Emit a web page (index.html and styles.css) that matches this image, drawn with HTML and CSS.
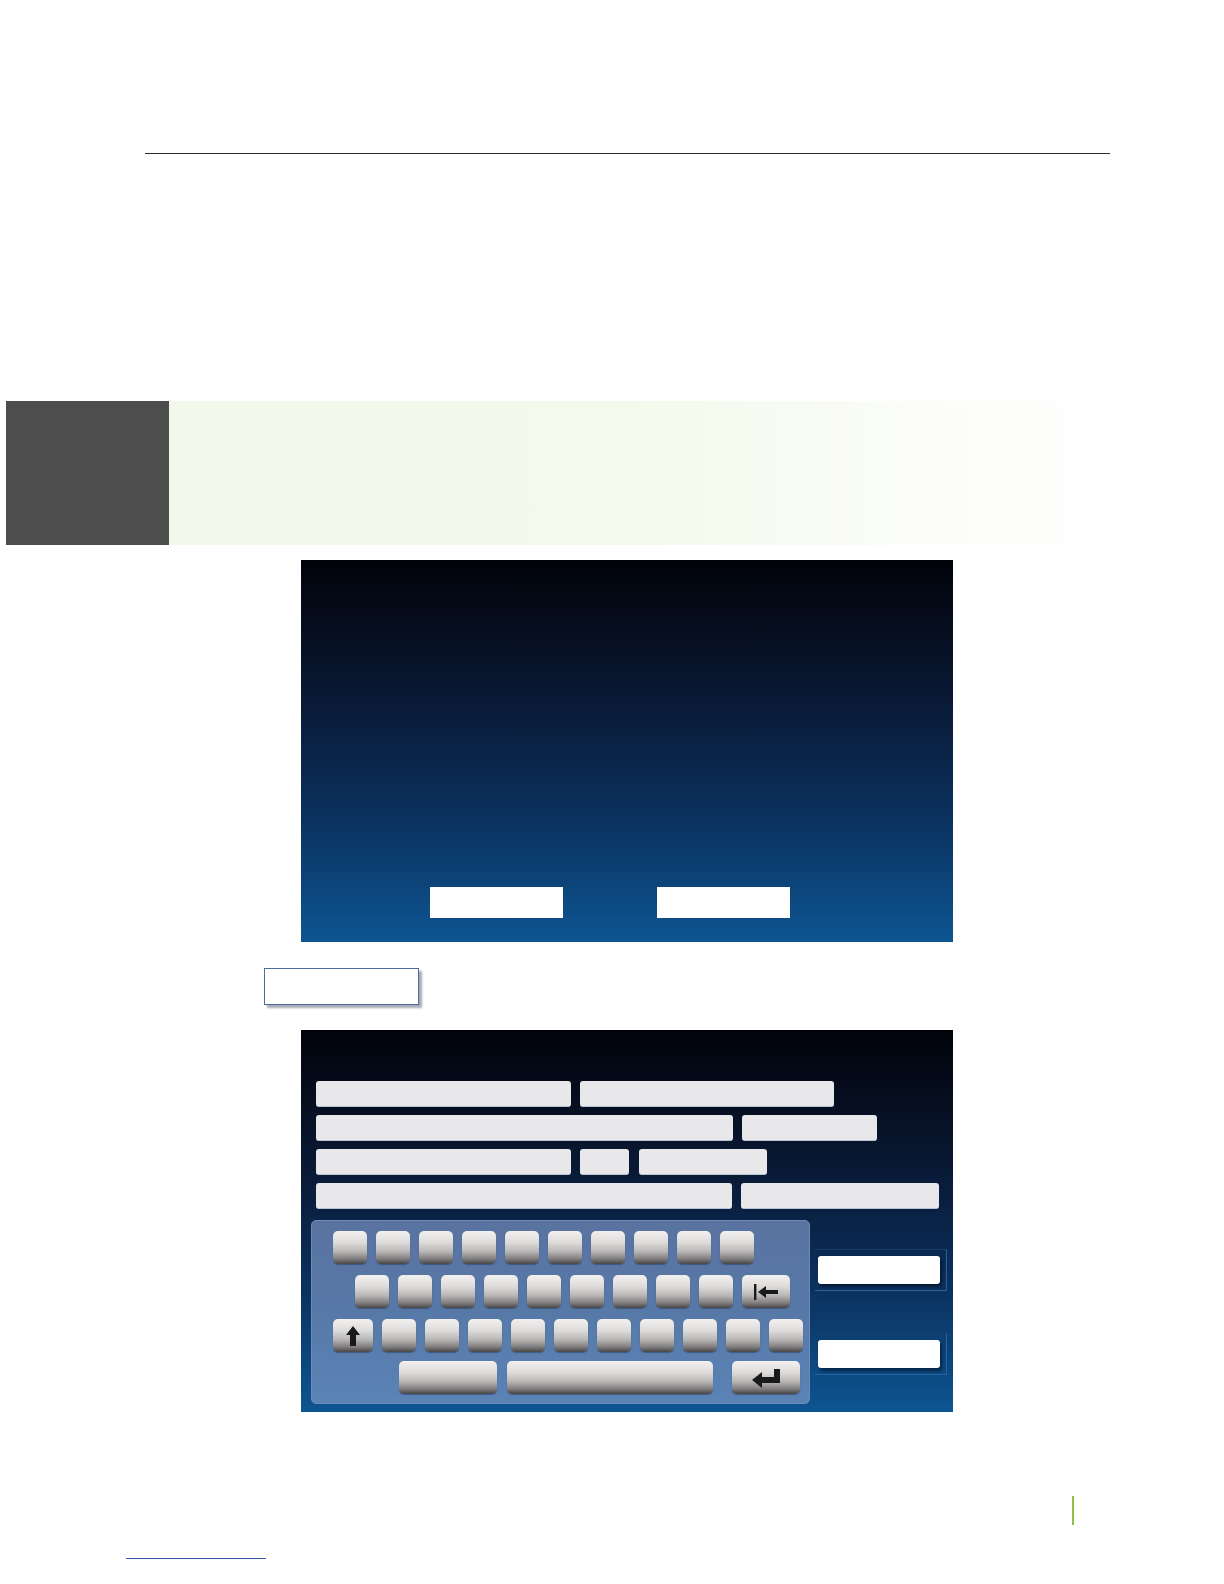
FILE: index.html
```html
<!DOCTYPE html>
<html>
<head>
<meta charset="utf-8">
<link rel="stylesheet" href="styles.css">
</head>
<body>
<div class="page">
  <div class="top-rule"></div>

  <div class="banner">
    <div class="banner-tab"></div>
    <div class="banner-body"></div>
  </div>

  <div class="screen screen-dialog">
    <div class="dialog-buttons">
      <div class="dlg-btn"></div>
      <div class="dlg-btn"></div>
    </div>
  </div>

  <div class="label-box"></div>

  <div class="screen screen-form">
    <div class="fields">
      <div class="field-row">
        <div class="field w255"></div>
        <div class="field w254"></div>
      </div>
      <div class="field-row">
        <div class="field w417"></div>
        <div class="field w135"></div>
      </div>
      <div class="field-row">
        <div class="field w255"></div>
        <div class="field w49"></div>
        <div class="field w128"></div>
      </div>
      <div class="field-row">
        <div class="field w416"></div>
        <div class="field w198"></div>
      </div>
    </div>

    <div class="lower">
      <div class="keyboard">
        <div class="key-row r1">
          <div class="key"></div><div class="key"></div><div class="key"></div><div class="key"></div><div class="key"></div>
          <div class="key"></div><div class="key"></div><div class="key"></div><div class="key"></div><div class="key"></div>
        </div>
        <div class="key-row r2">
          <div class="key"></div><div class="key"></div><div class="key"></div><div class="key"></div><div class="key"></div>
          <div class="key"></div><div class="key"></div><div class="key"></div><div class="key"></div>
          <div class="key key-back">
            <svg width="30" height="20" viewBox="0 0 30 20"><rect x="3" y="2" width="2.4" height="16" fill="#1a1a1a"/><path d="M7 10 L15 4 L15 8 L27 8 L27 12 L15 12 L15 16 Z" fill="#1a1a1a"/></svg>
          </div>
        </div>
        <div class="key-row r3">
          <div class="key key-shift">
            <svg width="18" height="24" viewBox="0 0 18 24"><path d="M9 2 L16 11 L12 11 L12 22 L6 22 L6 11 L2 11 Z" fill="#1a1a1a"/></svg>
          </div>
          <div class="key"></div><div class="key"></div><div class="key"></div><div class="key"></div><div class="key"></div>
          <div class="key"></div><div class="key"></div><div class="key"></div><div class="key"></div><div class="key"></div>
        </div>
        <div class="key-row r4">
          <div class="key key-mode"></div>
          <div class="key key-space"></div>
          <div class="key key-enter">
            <svg width="34" height="22" viewBox="0 0 34 22"><path d="M25 2 L31 2 L31 16 L13 16 L13 21 L3 13 L13 5 L13 10 L25 10 Z" fill="#1a1a1a"/></svg>
          </div>
        </div>
      </div>

      <div class="side-buttons">
        <div class="side-slot"><div class="side-btn"></div></div>
        <div class="side-slot"><div class="side-btn"></div></div>
      </div>
    </div>
  </div>

  <div class="page-mark"></div>
  <div class="footer-link"></div>
</div>
</body>
</html>
```

FILE: styles.css
```css
html, body {
  margin: 0;
  padding: 0;
  background: #ffffff;
  font-family: "Liberation Sans", Arial, sans-serif;
}

.page {
  position: relative;
  width: 1224px;
  height: 1584px;
  overflow: hidden;
  padding-top: 153px;
  box-sizing: border-box;
}

.top-rule {
  margin-left: 145px;
  width: 965px;
  height: 0;
  border-top: 1.5px solid #2e2e2e;
}

.banner {
  display: flex;
  margin-top: 247px;
  margin-left: 6px;
  height: 144px;
}

.banner-tab {
  width: 163px;
  background: #4e4d4e;
}

.banner-body {
  width: 972px;
  background: linear-gradient(90deg, #f2f9ea 0%, #f3f9eb 45%, #f7fbf1 62%, #fcfdfa 80%, #ffffff 100%);
}

.screen {
  margin-left: 301px;
  width: 652px;
  height: 382px;
  box-sizing: border-box;
  background: linear-gradient(180deg, #01030a 0%, #071023 22%, #0a1f40 45%, #0b3462 70%, #0d5592 100%);
}

.screen-dialog {
  margin-top: 15px;
  display: flex;
  flex-direction: column;
  justify-content: flex-end;
  padding-bottom: 24px;
}

.dialog-buttons {
  display: flex;
  gap: 94px;
  padding-left: 129px;
}

.dlg-btn {
  width: 133px;
  height: 31px;
  background: #ffffff;
}

.label-box {
  margin-top: 26px;
  margin-left: 264px;
  width: 155px;
  height: 37px;
  box-sizing: border-box;
  background: #ffffff;
  border: 1.5px solid #4e6d9c;
  box-shadow: 3px 3px 2px #a5acb8;
}

.screen-form {
  margin-top: 25px;
  padding-top: 51px;
  position: relative;
}

.fields {
  display: flex;
  flex-direction: column;
  gap: 8px;
  padding-left: 15px;
}

.field-row {
  display: flex;
  gap: 9px;
}

.field {
  height: 26px;
  box-sizing: border-box;
  background: #e8e8ea;
  border-radius: 3px;
  border-bottom: 1px solid #b8c4d4;
}

.w255 { width: 255px; }
.w254 { width: 254px; }
.w417 { width: 417px; }
.w135 { width: 135px; }
.w49 { width: 49px; }
.w128 { width: 128px; margin-left: 1px; }
.w416 { width: 416px; }
.w198 { width: 198px; }

.lower {
  display: flex;
  margin-top: 11px;
  padding-left: 10px;
}

.keyboard {
  width: 499px;
  height: 184px;
  box-sizing: border-box;
  border-radius: 5px;
  background: linear-gradient(180deg, #5a73a0 0%, #5779a8 50%, #5b83b6 100%);
  border: 1px solid #6f8bb5;
  padding-top: 10px;
  display: flex;
  flex-direction: column;
  gap: 11px;
}

.key-row {
  display: flex;
  gap: 9px;
}

.r1 { padding-left: 21px; }
.r2 { padding-left: 43px; }
.r3 { padding-left: 21px; }
.r4 { padding-left: 87px; gap: 10px; margin-top: -2px; }

.key {
  width: 34px;
  height: 33px;
  border-radius: 5px;
  background: linear-gradient(180deg, #f3f1f0 0%, #dedcdb 35%, #b9b7b6 62%, #7e7c7c 85%, #474545 100%);
  box-shadow: 0 1px 1px rgba(20, 30, 50, 0.35);
  display: flex;
  align-items: center;
  justify-content: center;
}

.key-back {
  width: 48px;
  margin-left: 0;
}

.key-shift { width: 40px; }
.key-mode { width: 98px; }
.key-space { width: 206px; }
.key-enter { width: 68px; margin-left: 9px; }

.side-buttons {
  display: flex;
  flex-direction: column;
  gap: 42px;
  margin-left: 5px;
  padding-top: 29px;
}

.side-slot {
  width: 132px;
  height: 42px;
  box-sizing: border-box;
  border-right: 1px solid #2a64a0;
  border-bottom: 1px solid #2a64a0;
  border-top: 1px solid #153d6e;
  padding: 6px 0 0 3px;
}

.side-btn {
  width: 122px;
  height: 28px;
  background: #ffffff;
  border-radius: 3px;
  box-shadow: 2px 3px 3px rgba(0, 10, 30, 0.55);
}

.page-mark {
  position: absolute;
  left: 1072px;
  top: 1496px;
  width: 1.5px;
  height: 29px;
  background: #8dc04a;
}

.footer-link {
  position: absolute;
  left: 126px;
  top: 1558px;
  width: 140px;
  height: 1px;
  background: #3656a8;
}
```
